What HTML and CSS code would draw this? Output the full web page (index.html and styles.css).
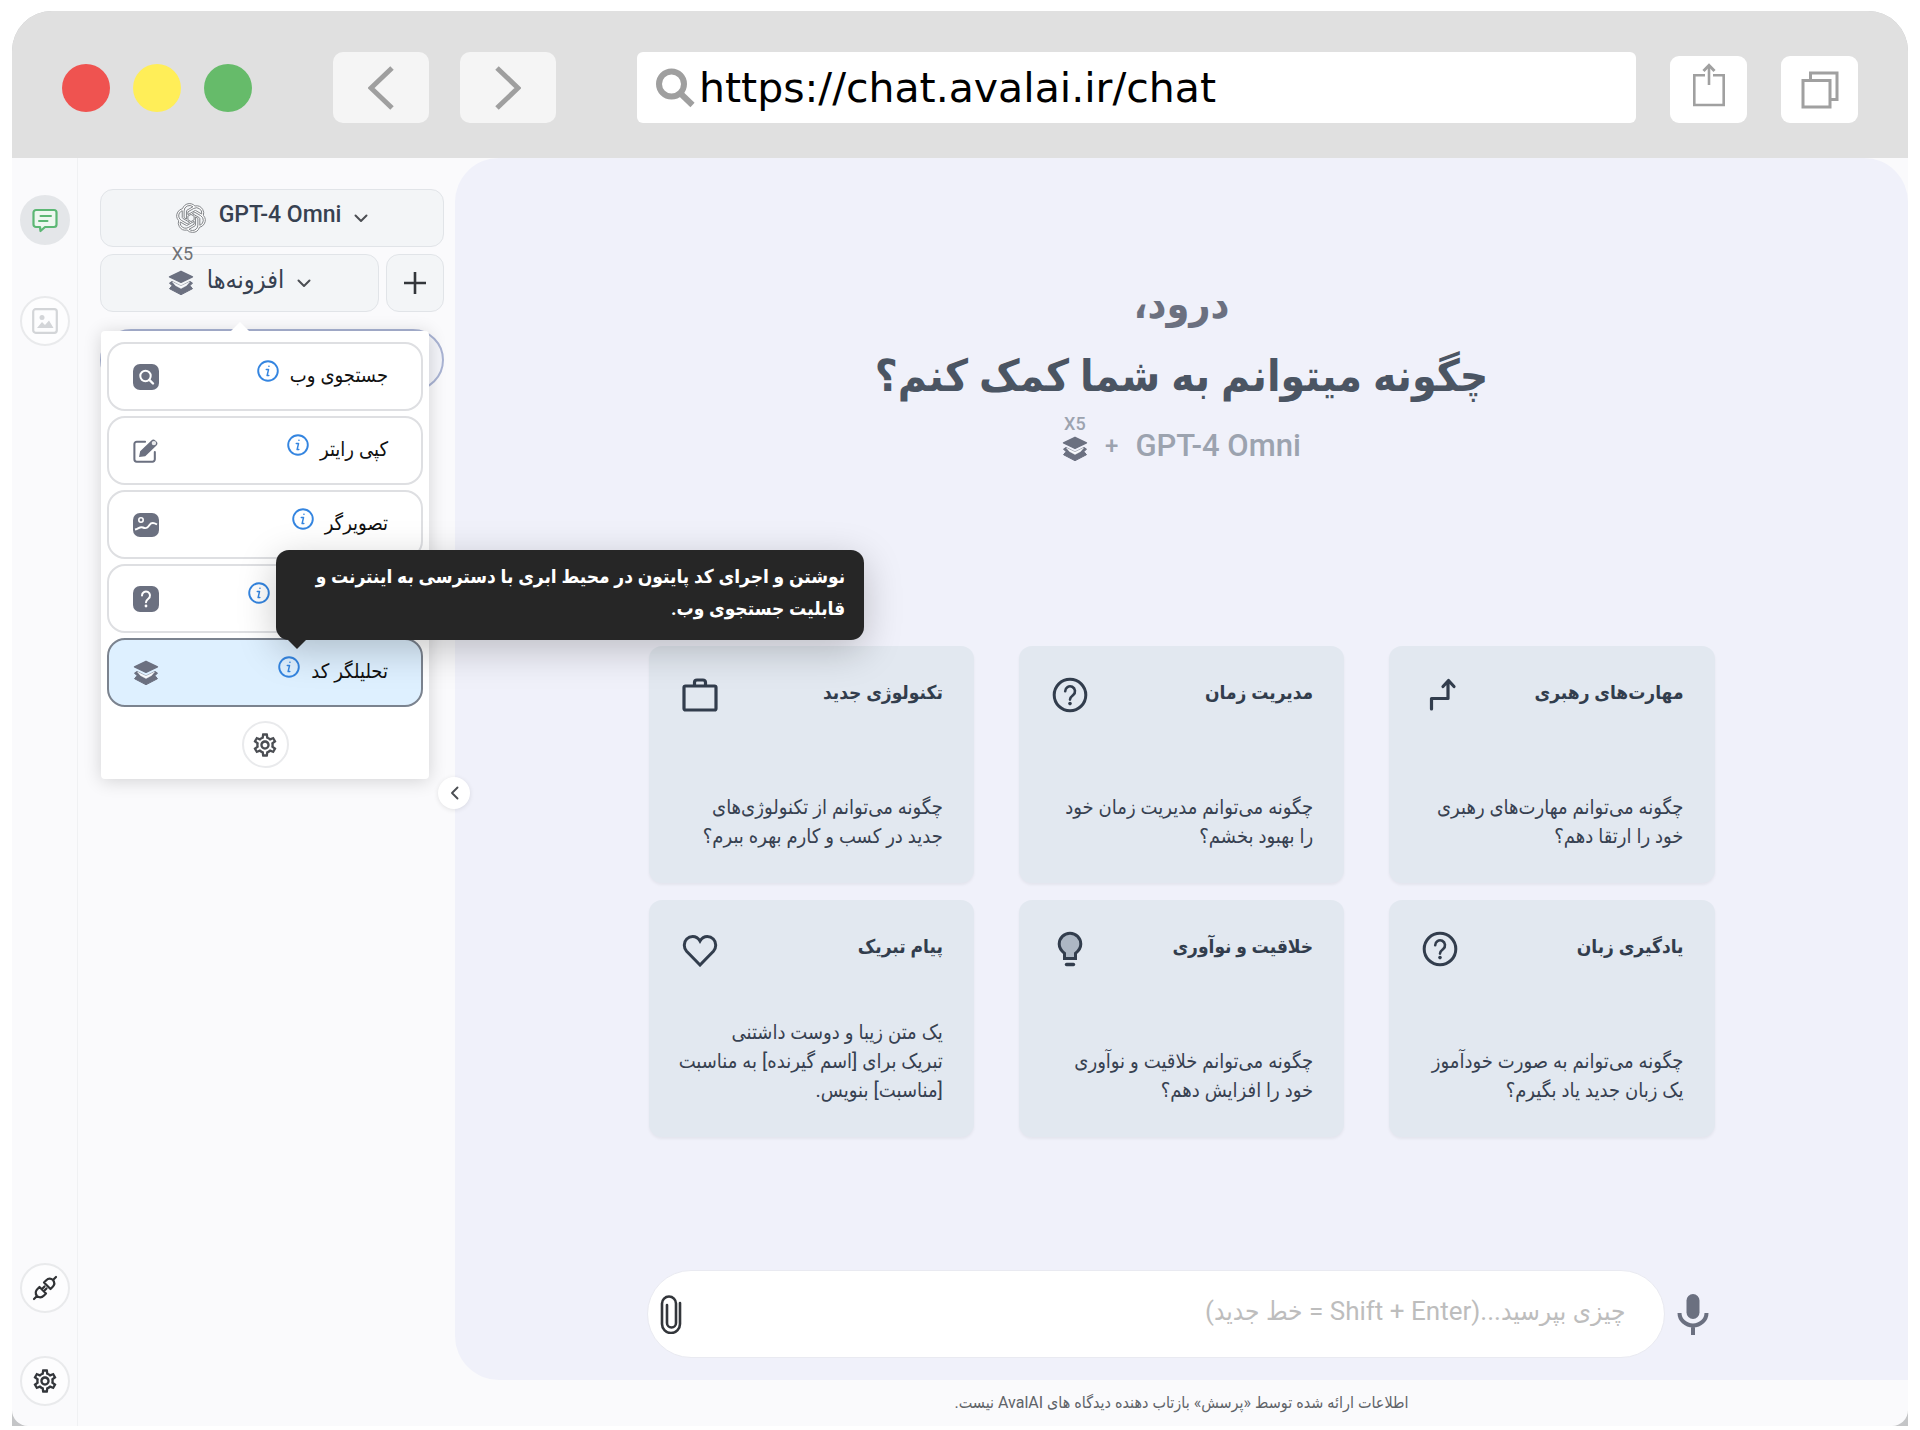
FILE: index.html
```html
<!DOCTYPE html>
<html lang="fa">
<head>
<meta charset="utf-8">
<meta name="viewport" content="width=device-width, initial-scale=1">
<title>AvalAI Chat</title>
<link rel="stylesheet" href="styles.css">
</head>
<body>
<svg class="sprite" aria-hidden="true">
  <symbol id="gear" viewBox="0 0 24 24"><path fill="currentColor" d="M19.43 12.98c.04-.32.07-.64.07-.98 0-.34-.03-.66-.07-.98l2.11-1.65c.19-.15.24-.42.12-.64l-2-3.46a.5.5 0 0 0-.61-.22l-2.49 1c-.52-.4-1.08-.73-1.69-.98l-.38-2.65A.488.488 0 0 0 14 2h-4c-.25 0-.46.18-.49.42l-.38 2.65c-.61.25-1.17.59-1.69.98l-2.49-1a.566.566 0 0 0-.18-.03c-.17 0-.34.09-.43.25l-2 3.46c-.13.22-.07.49.12.64l2.11 1.65c-.04.32-.07.65-.07.98 0 .33.03.66.07.98l-2.11 1.65c-.19.15-.24.42-.12.64l2 3.46a.5.5 0 0 0 .61.22l2.49-1c.52.4 1.08.73 1.69.98l.38 2.65c.03.24.24.42.49.42h4c.25 0 .46-.18.49-.42l.38-2.65c.61-.25 1.17-.59 1.69-.98l2.49 1c.06.02.12.03.18.03.17 0 .34-.09.43-.25l2-3.46c.12-.22.07-.49-.12-.64l-2.11-1.65zm-1.98-1.71c.04.31.05.52.05.73 0 .21-.02.43-.05.73l-.14 1.13.89.7 1.08.84-.7 1.21-1.27-.51-1.04-.42-.9.68c-.43.32-.84.56-1.25.73l-1.06.43-.16 1.13-.2 1.35h-1.4l-.19-1.35-.16-1.13-1.06-.43c-.43-.18-.83-.41-1.23-.71l-.91-.7-1.06.43-1.27.51-.7-1.21 1.08-.84.89-.7-.14-1.13c-.03-.31-.05-.54-.05-.74s.02-.43.05-.73l.14-1.13-.89-.7-1.08-.84.7-1.21 1.27.51 1.04.42.9-.68c.43-.32.84-.56 1.25-.73l1.06-.43.16-1.13.2-1.35h1.39l.19 1.35.16 1.13 1.06.43c.43.18.83.41 1.23.71l.91.7 1.06-.43 1.27-.51.7 1.21-1.07.85-.89.7.14 1.13zM12 8c-2.21 0-4 1.79-4 4s1.79 4 4 4 4-1.79 4-4-1.79-4-4-4zm0 6c-1.1 0-2-.9-2-2s.9-2 2-2 2 .9 2 2-.9 2-2 2z"/></symbol>
  <symbol id="layers" viewBox="0 0 26 26"><path d="M1.500 13 4 11.500 13 16 22 11.500 24.500 13 22 15.700 24.500 18.700 13 24.700 1.500 18.700 4 15.700z" fill="currentColor" stroke="currentColor" stroke-linejoin="round"/><path d="M4.500 12 13 16 21.500 12 18.500 15.500 13 18.400 7.500 15.500z" fill="#f8fafc" stroke="#f8fafc" stroke-width=".5"/><path d="m13 1.300 11.500 5.500L13 12.400 1.500 6.800z" fill="currentColor" stroke="currentColor" stroke-width="1.400" stroke-linejoin="round"/></symbol>
  <symbol id="info" viewBox="0 0 22 22"><circle cx="11" cy="11" r="9.8" fill="none" stroke="currentColor" stroke-width="1.9"/><g fill="none" stroke="currentColor" stroke-width="1.500" stroke-linecap="round" stroke-linejoin="round"><path d="M9.300 9.600h2.200l-1.400 6h1.700"/><path d="M11.900 6.200h.1"/></g></symbol>
  <symbol id="chevron" viewBox="0 0 14 9"><path d="m1.500 1.500 5.500 5.500 5.500-5.500" fill="none" stroke="currentColor" stroke-width="2" stroke-linecap="round" stroke-linejoin="round"/></symbol>
  <symbol id="help" viewBox="0 0 36 36"><g fill="none" stroke="currentColor" stroke-width="3" stroke-linecap="round"><circle cx="18" cy="18" r="15.800"/><path d="M13.200 14.200a4.900 4.900 0 1 1 8 3.800c-1.900 1.500-3.200 2.400-3.200 4.600" stroke-width="2.600"/></g><circle cx="18" cy="26.600" r="1.800" fill="currentColor"/></symbol>
</svg>
<div class="window">
  <header class="chrome">
    <div class="lights"><span class="light red"></span><span class="light yellow"></span><span class="light green"></span></div>
    <nav class="history">
      <button class="nav-btn" aria-label="Back"><svg width="26" height="44" viewBox="0 0 26 44"><path d="M24 2 3 22 24 42" fill="none" stroke="#9f9f9f" stroke-width="5"/></svg></button>
      <button class="nav-btn" aria-label="Forward"><svg width="26" height="44" viewBox="0 0 26 44"><path d="M2 2 23 22 2 42" fill="none" stroke="#9f9f9f" stroke-width="5"/></svg></button>
    </nav>
    <label class="address">
      <svg width="40" height="40" viewBox="0 0 40 40"><g fill="none" stroke="#9f9f9f"><circle cx="16.500" cy="16" r="12.500" stroke-width="6"/><path d="M25 25 37.500 37" stroke-width="6"/></g></svg>
      <input class="url" type="text" value="https://chat.avalai.ir/chat" aria-label="Address">
    </label>
    <div class="tools">
      <button class="tool-btn share" aria-label="Share"><svg width="34" height="44" viewBox="0 0 34 44"><g fill="none" stroke="#a0a0a0" stroke-width="2.600"><path d="M13 12.300H2.300V42h29.400V12.300H21"/><path d="M17 22V3"/><path d="M11.500 8 17 2.300 22.500 8" stroke-width="3"/></g></svg></button>
      <button class="tool-btn" aria-label="Tabs"><svg width="38" height="38" viewBox="0 0 38 38"><g fill="none" stroke="#a0a0a0" stroke-width="3"><path d="M2 9.500h27V36H2z"/><path d="M9.500 9.500V2H36v26.500h-7"/></g></svg></button>
    </div>
  </header>
  <div class="app">
    <nav class="rail">
      <button class="round active" aria-label="گفتگو"><svg width="26" height="26" viewBox="0 0 26 26"><path d="M4 3h18a2.500 2.500 0 0 1 2.500 2.500v12A2.500 2.500 0 0 1 22 20H13l-4.500 4-.5-4H4a2.500 2.500 0 0 1-2.500-2.500v-12A2.500 2.500 0 0 1 4 3z" fill="#eef7f0" stroke="#5cb774" stroke-width="2.200" stroke-linejoin="round"/><path d="M8.500 9h10.500M7 14h8.500" stroke="#5cb774" stroke-width="2" stroke-linecap="round"/></svg></button>
      <button class="round image" aria-label="تصویر"><svg width="26" height="26" viewBox="0 0 26 26"><rect x="1.200" y="1.200" width="23.600" height="23.600" rx="2.500" fill="none" stroke="#d3d5d8" stroke-width="2.200"/><path d="m5 20 5-6 3 3 4-4.500 4.500 7.500z" fill="#d3d5d8"/><circle cx="10" cy="9.500" r="2.500" fill="#d3d5d8"/></svg></button>
      <button class="round bottom" aria-label="افزونه"><svg width="26" height="26" viewBox="0 0 26 26" fill="none" stroke="#303235" stroke-width="2.200" stroke-linecap="round" stroke-linejoin="round"><path d="m2 24 3-3M21 5l3-3M5 21c-2-2.500-1.500-5 .5-7l2-2 6.500 6.500-2 2c-2 2-4.500 2.500-7 .5zM21 5c2 2.500 1.500 5-.5 7l-2 2L12 7.500l2-2c2-2 4.500-2.500 7-.5zM10 14l2.500-2.500M12 16l2.500-2.500"/></svg></button>
      <button class="round" aria-label="تنظیمات"><svg width="28" height="28"><use href="#gear"/></svg></button>
    </nav>
    <aside class="sidebar">
      <button class="box model">
        <svg width="30" height="30" viewBox="-0.500 -0.500 25 25"><path fill="#fff" stroke="#7b7e83" stroke-width=".8" d="M22.2819 9.8211a5.9847 5.9847 0 0 0-.5157-4.9108 6.0462 6.0462 0 0 0-6.5098-2.9A6.0651 6.0651 0 0 0 4.9807 4.1818a5.9847 5.9847 0 0 0-3.9977 2.9 6.0462 6.0462 0 0 0 .7427 7.0966 5.98 5.98 0 0 0 .511 4.9107 6.051 6.051 0 0 0 6.5146 2.9001A5.9847 5.9847 0 0 0 13.2599 24a6.0557 6.0557 0 0 0 5.7718-4.2058 5.9894 5.9894 0 0 0 3.9977-2.9001 6.0557 6.0557 0 0 0-.7475-7.0729zm-9.022 12.6081a4.4755 4.4755 0 0 1-2.8764-1.0408l.1419-.0804 4.7783-2.7582a.7948.7948 0 0 0 .3927-.6813v-6.7369l2.02 1.1686a.071.071 0 0 1 .038.052v5.5826a4.504 4.504 0 0 1-4.4945 4.4944zm-9.6607-4.1254a4.4708 4.4708 0 0 1-.5346-3.0137l.142.0852 4.783 2.7582a.7712.7712 0 0 0 .7806 0l5.8428-3.3685v2.3324a.0804.0804 0 0 1-.0332.0615L9.74 19.9502a4.4992 4.4992 0 0 1-6.1408-1.6464zM2.3408 7.8956a4.485 4.485 0 0 1 2.3655-1.9728V11.6a.7664.7664 0 0 0 .3879.6765l5.8144 3.3543-2.0201 1.1685a.0757.0757 0 0 1-.071 0l-4.8303-2.7865A4.504 4.504 0 0 1 2.3408 7.872zm16.5963 3.8558L13.1038 8.364 15.1192 7.2a.0757.0757 0 0 1 .071 0l4.8303 2.7913a4.4944 4.4944 0 0 1-.6765 8.1042v-5.6772a.79.79 0 0 0-.407-.667zm2.0107-3.0231l-.142-.0852-4.7735-2.7818a.7759.7759 0 0 0-.7854 0L9.409 9.2297V6.8974a.0662.0662 0 0 1 .0284-.0615l4.8303-2.7866a4.4992 4.4992 0 0 1 6.6802 4.66zM8.3065 12.863l-2.02-1.1638a.0804.0804 0 0 1-.038-.0567V6.0742a4.4992 4.4992 0 0 1 7.3757-3.4537l-.142.0805L8.704 5.459a.7948.7948 0 0 0-.3927.6813zm1.0976-2.3654l2.602-1.4998 2.6069 1.4998v2.9994l-2.5974 1.4997-2.6067-1.4997Z"/></svg>
        <span class="box-text">GPT-4 Omni</span>
        <svg class="chev" width="14" height="9"><use href="#chevron"/></svg>
      </button>
      <div class="plugins">
        <button class="box plugin">
          <span class="stack"><svg width="26" height="26"><use href="#layers"/></svg><span class="count">X5</span></span>
          <span class="box-text fa" dir="rtl">افزونه‌ها</span>
          <svg class="chev" width="14" height="9"><use href="#chevron"/></svg>
        </button>
        <button class="box plus" aria-label="جدید"><svg width="24" height="24" viewBox="0 0 24 24"><path d="M12 1v22M1 12h22" stroke="#33363b" stroke-width="2.600"/></svg></button>
        <div class="menu">
          <button class="item"><svg width="26" height="26" viewBox="0 0 26 26"><rect width="26" height="26" rx="7" fill="#6b7080"/><circle cx="12.500" cy="12" r="5.200" fill="none" stroke="#fff" stroke-width="2"/><path d="m16.500 16 3.500 3.500" stroke="#fff" stroke-width="2.400" stroke-linecap="round"/></svg><span class="item-label"><svg class="info" width="22" height="22"><use href="#info"/></svg><span dir="rtl">جستجوی وب</span></span></button>
          <button class="item"><svg width="26" height="26" viewBox="0 0 28 28"><path d="M13 4H4a2.500 2.500 0 0 0-2.500 2.500V23A2.500 2.500 0 0 0 4 25.500h17a2.500 2.500 0 0 0 2.500-2.500V15" fill="none" stroke="#6b7080" stroke-width="2.200" stroke-linecap="round"/><path d="m6.500 20.500 1.200-6.200L19.800 2.600a3 3 0 0 1 4.200 0l1.300 1.300a3 3 0 0 1 0 4.200L13.200 19.600z" fill="#6b7080"/><circle cx="22.500" cy="5.500" r="2.400" fill="#fff" fill-opacity=".85"/></svg><span class="item-label"><svg class="info" width="22" height="22"><use href="#info"/></svg><span dir="rtl">کپی رایتر</span></span></button>
          <button class="item"><svg width="26" height="26" viewBox="0 0 26 26"><rect y="1" width="26" height="24" rx="7" fill="#6b7080"/><path d="M2 17.500c4-1 5-3.500 8-2s4.500.500 6.500-2.500 5-2 7.500-.5" fill="none" stroke="#fff" stroke-width="2"/><circle cx="8" cy="8" r="2.200" fill="none" stroke="#fff" stroke-width="1.600"/></svg><span class="item-label"><svg class="info" width="22" height="22"><use href="#info"/></svg><span dir="rtl">تصویرگر</span></span></button>
          <button class="item" aria-label="راهنما"><svg width="26" height="26" viewBox="0 0 26 26"><rect width="26" height="26" rx="7" fill="#6b7080"/><path d="M9 9.500a4 4 0 1 1 6.300 3.200c-1.600 1.200-2.300 1.800-2.300 3.600" fill="none" stroke="#fff" stroke-width="2" stroke-linecap="round"/><circle cx="13" cy="20" r="1.400" fill="#fff"/></svg><span class="item-label"><svg class="info" width="22" height="22"><use href="#info"/></svg><span class="covered"></span></span></button>
          <button class="item selected"><svg width="26" height="26"><use href="#layers"/></svg><span class="item-label"><span class="tip-anchor"><svg class="info" width="22" height="22"><use href="#info"/></svg><span class="tooltip" role="tooltip" dir="rtl">نوشتن و اجرای کد پایتون در محیط ابری با دسترسی به اینترنت و<br>قابلیت جستجوی وب.</span></span><span dir="rtl">تحلیلگر کد</span></span></button>
          <button class="round menu-gear" aria-label="تنظیمات افزونه‌ها"><svg width="28" height="28"><use href="#gear"/></svg></button>
        </div>
      </div>
      <button class="new-chat" aria-label="گفتگوی جدید"></button>
      <button class="collapse" aria-label="بستن"><svg width="9" height="14" viewBox="0 0 9 14"><path d="M7.500 1.500 2 7l5.500 5.500" fill="none" stroke="#4b4e53" stroke-width="1.900" stroke-linecap="round" stroke-linejoin="round"/></svg></button>
    </aside>
    <div class="content">
      <main class="panel">
        <section class="hero">
          <p class="hello" dir="rtl">درود،</p>
          <h1 class="question" dir="rtl">چگونه میتوانم به شما کمک کنم؟</h1>
          <div class="active-model"><span class="stack"><svg width="26" height="26"><use href="#layers"/></svg><span class="count">X5</span></span><span class="and">+</span><span>GPT-4 Omni</span></div>
        </section>
        <section class="cards" dir="rtl">
          <button class="card"><span class="card-head"><strong>مهارت‌های رهبری</strong><svg width="36" height="36" viewBox="0 0 36 36"><path d="M9.500 32V21.500H26V5M21 9.500l5.500-6 5.500 6" fill="none" stroke="currentColor" stroke-width="3.200" stroke-linecap="round" stroke-linejoin="round"/></svg></span><span class="card-text">چگونه می‌توانم مهارت‌های رهبری<br>خود را ارتقا دهم؟</span></button>
          <button class="card"><span class="card-head"><strong>مدیریت زمان</strong><svg width="36" height="36"><use href="#help"/></svg></span><span class="card-text">چگونه می‌توانم مدیریت زمان خود<br>را بهبود بخشم؟</span></button>
          <button class="card"><span class="card-head"><strong>تکنولوژی جدید</strong><svg width="36" height="36" viewBox="0 0 36 36"><g fill="none" stroke="currentColor" stroke-width="3.200"><rect x="2" y="9" width="32" height="24" rx="1.500"/><path d="M12.500 9V5.500a2.500 2.500 0 0 1 2.500-2.500h6a2.500 2.500 0 0 1 2.500 2.500V9"/></g></svg></span><span class="card-text">چگونه می‌توانم از تکنولوژی‌های<br>جدید در کسب و کارم بهره ببرم؟</span></button>
          <button class="card"><span class="card-head"><strong>یادگیری زبان</strong><svg width="36" height="36"><use href="#help"/></svg></span><span class="card-text">چگونه می‌توانم به صورت خودآموز<br>یک زبان جدید یاد بگیرم؟</span></button>
          <button class="card"><span class="card-head"><strong>خلاقیت و نوآوری</strong><svg width="36" height="36" viewBox="0 0 36 36"><path d="M12.500 27.500v-5.200C9 19.500 7.200 16.800 7.200 13a10.800 10.800 0 0 1 21.600 0c0 3.800-1.800 6.500-5.300 9.300v5.200z" fill="#adb7c4" stroke="currentColor" stroke-width="3"/><path d="M14.500 33.500h7" stroke="currentColor" stroke-width="3.400" stroke-linecap="round"/></svg></span><span class="card-text">چگونه می‌توانم خلاقیت و نوآوری<br>خود را افزایش دهم؟</span></button>
          <button class="card"><span class="card-head"><strong>پیام تبریک</strong><svg width="36" height="36" viewBox="0 0 36 36"><path d="M18 34 4.600 20.300a9 9 0 0 1-2.300-6.300 8.400 8.400 0 0 1 8.400-8.500c3.200 0 5.600 1.700 7.300 4.500 1.700-2.800 4.100-4.500 7.300-4.500a8.400 8.400 0 0 1 8.400 8.500 9 9 0 0 1-2.300 6.300z" fill="none" stroke="currentColor" stroke-width="3"/></svg></span><span class="card-text">یک متن زیبا و دوست داشتنی<br>تبریک برای [اسم گیرنده] به مناسبت<br>[مناسبت] بنویس.</span></button>
        </section>
        <form class="composer">
          <div class="field">
            <button type="button" class="plain" aria-label="پیوست"><svg width="22" height="40" viewBox="0 0 22 40"><path d="M20 9v21a9 9 0 0 1-18 0V9.500a7 7 0 0 1 14 0V29a4.500 4.500 0 0 1-9 0V11" fill="none" stroke="#33363b" stroke-width="2.600" stroke-linecap="round"/></svg></button>
            <input class="prompt" type="text" dir="rtl" placeholder="چیزی بپرسید...(Shift + Enter = خط جدید)" aria-label="پیام">
          </div>
          <button type="button" class="plain" aria-label="ضبط صدا"><svg width="32" height="42" viewBox="0 0 32 42"><rect x="9.500" y="1" width="13" height="25" rx="6.500" fill="#6b7080"/><path d="M2.500 20a13.500 12.500 0 0 0 27 0M16 33v9" fill="none" stroke="#6b7080" stroke-width="4"/></svg></button>
        </form>
      </main>
      <footer class="notice" dir="rtl">اطلاعات ارائه شده توسط «پرسش» بازتاب دهنده دیدگاه های AvalAI نیست.</footer>
    </div>
  </div>
</div>
</body>
</html>
```
FILE: styles.css
```css
* { box-sizing: border-box; }
body {
  margin: 0;
  min-height: 100vh;
  padding: 11px 12px 4px;
  display: flex;
  background: #fff;
  font-family: Roboto, "DejaVu Sans Condensed", "DejaVu Sans", sans-serif;
  font-size: 16px;
  color: #374151;
}
button, input { font: inherit; color: inherit; margin: 0; padding: 0; border: 0; background: none; }
button { cursor: pointer; }
svg { display: block; flex: none; }
.sprite { position: absolute; width: 0; height: 0; }

.window { flex: 1; min-width: 0; display: flex; flex-direction: column; background: #c4c5c7; border-radius: 40px 40px 0 0; }

/* browser chrome */
.chrome {
  display: flex;
  align-items: flex-start;
  height: 147px;
  padding: 41px 50px 0;
  background: #e0e0e0;
  border-radius: 40px 40px 0 0;
}
.lights { display: flex; gap: 23px; padding-top: 12px; }
.light { width: 48px; height: 48px; border-radius: 50%; }
.red { background: #ef5350; }
.yellow { background: #ffee58; }
.green { background: #66bb6a; }
.history { display: flex; gap: 31px; margin-left: 81px; }
.nav-btn { width: 96px; height: 71px; border-radius: 10px; background: #f5f5f5; display: grid; place-items: center; }
.address { flex: 1; min-width: 0; height: 71px; margin: 0 34px 0 81px; padding-left: 18px; display: flex; align-items: center; gap: 4px; background: #fff; border-radius: 6px; }
.url { flex: 1; min-width: 0; font-family: "DejaVu Sans", sans-serif; font-size: 41px; color: #000; }
.tools { display: flex; gap: 34px; padding-top: 4px; }
.tool-btn { width: 77px; height: 67px; border-radius: 9px; background: #fff; display: grid; place-items: center; }
.share { padding-bottom: 10px; }

/* app shell */
.app { flex: 1; display: flex; background: #fafafc; border-radius: 0 0 16px 16px; }
.rail { flex: none; width: 66px; padding: 37px 0 20px; display: flex; flex-direction: column; align-items: center; border-right: 1px solid #f0f1f3; }
.round { width: 50px; height: 50px; border-radius: 50%; border: 2px solid #e9eaec; background: #fdfdfe; display: grid; place-items: center; color: #33363b; }
.round.active { background: #e4e6e9; border-color: #e4e6e9; }
.image { margin-top: 51px; }
.bottom { margin: auto 0 43px; }
.sidebar { position: relative; z-index: 2; flex: none; width: 377px; padding: 31px 11px 0 22px; }
.box { display: flex; align-items: center; justify-content: center; height: 58px; border: 1px solid #e1e4e8; border-radius: 13px; background: #f3f5f7; }
.box-text { font-size: 23px; font-weight: 500; line-height: 28px; padding-bottom: 6px; }
.box-text.fa { font-size: 25px; }
.chev { color: #4b4e53; }
.model { width: 100%; gap: 13px; }
.plugins { position: relative; display: flex; gap: 7px; margin-top: 7px; }
.plugin { flex: 1; gap: 13px; }
.plus { width: 58px; }
.stack { position: relative; display: block; color: #6b7080; }
.count { position: absolute; left: 4px; bottom: 32px; font-size: 18px; line-height: 20px; color: #6f7276; }
.new-chat { display: block; width: 100%; height: 62px; margin-top: 17px; border: 2px solid #a9b3d3; border-radius: 31px; background: #f3f4f9; }
.collapse { position: absolute; right: -15px; top: 619px; width: 32px; height: 32px; border-radius: 50%; background: #fff; display: grid; place-items: center; box-shadow: 0 1px 5px rgba(0,0,0,.1); }

/* plug-in menu */
.menu { position: absolute; left: 1px; right: 15px; top: 77px; z-index: 3; padding: 11px 6px; display: flex; flex-direction: column; gap: 5px; background: #fff; border-radius: 4px; box-shadow: 0 2px 18px rgba(0,0,0,.16); }
.menu::before { content: ""; position: absolute; left: 129px; top: -9px; border: 10px solid transparent; border-top: 0; border-bottom-color: #fff; }
.item { width: 100%; height: 69px; padding: 0 33px 0 24px; display: flex; align-items: center; justify-content: space-between; border: 2px solid #dedfe2; border-radius: 18px; background: #fff; color: #6b7080; }
.item.selected { background: #def0ff; border-color: #7b838f; }
.item-label { display: flex; align-items: center; gap: 11px; padding-bottom: 4px; color: #111; font-size: 20px; font-weight: 500; line-height: 28px; }
.info { color: #3485e0; margin-bottom: 8px; }
.covered { width: 107px; }
.tip-anchor { position: relative; }
.tooltip { position: absolute; left: -2px; bottom: 46px; z-index: 5; width: 588px; height: 90px; padding: 11px 19px; border-radius: 13px; background: #262626; color: #fff; font-size: 19px; font-weight: 700; line-height: 32px; text-align: right; white-space: nowrap; box-shadow: 0 10px 38px rgba(0,0,0,.22); }
.tooltip::after { content: ""; position: absolute; left: 12px; top: 100%; border: 9px solid transparent; border-bottom: 0; border-top-color: #262626; }
.menu-gear { width: 47px; height: 47px; align-self: center; margin-top: 9px; background: #fff; color: #4b4e53; }

/* chat */
.content { flex: 1; min-width: 0; display: flex; flex-direction: column; }
.panel { flex: 1; display: flex; flex-direction: column; align-items: center; padding: 114px 32px 22px; background: #f0f1fa; border-radius: 44px; border-bottom-right-radius: 0; }
.hero { display: flex; flex-direction: column; align-items: center; }
.hello { margin: 0; font-size: 41px; font-weight: 700; line-height: 64px; color: #6b7080; }
.question { margin: 4px 0 0; font-size: 44px; font-weight: 700; line-height: 72px; color: #4b5563; }
.active-model { display: flex; align-items: center; gap: 17px; margin-top: 12px; font-size: 31px; font-weight: 500; line-height: 44px; color: #9ca3af; }
.active-model .stack { margin-top: 6px; }
.active-model .count { left: 2px; bottom: 28px; color: #9ca3af; }
.and { font-size: 24px; }
.cards { width: 100%; max-width: 1066px; margin-top: 178px; display: grid; grid-template-columns: repeat(3, minmax(0, 1fr)); gap: 17px 45px; }
.card { height: 237px; padding: 31px 31px 32px 33px; display: flex; flex-direction: column; justify-content: space-between; border-radius: 13px; background: #e2e8f0; box-shadow: 0 2px 3px rgba(0,0,0,.05); text-align: right; }
.card-head { display: flex; justify-content: space-between; align-items: flex-end; color: #323d4d; }
.card-head strong { align-self: flex-start; font-size: 19px; font-weight: 700; line-height: 32px; }
.card-text { font-size: 20px; line-height: 29px; white-space: nowrap; }
.composer { width: 100%; max-width: 1070px; margin-top: auto; padding-right: 8px; display: flex; align-items: center; gap: 12px; }
.field { flex: 1; min-width: 0; height: 88px; padding: 0 38px 0 12px; display: flex; align-items: center; background: #fff; border: 1px solid #e9eaf1; border-radius: 44px; }
.prompt { flex: 1; min-width: 0; padding-bottom: 6px; font-size: 26px; }
.prompt::placeholder { color: #bdbdbd; opacity: 1; }
.field .prompt, .url { outline: 0; }
.notice { padding: 11px 0; font-size: 16px; line-height: 24px; text-align: center; color: #5f6368; }
```
